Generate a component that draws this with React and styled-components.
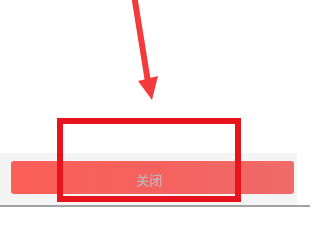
import React from 'react';
import styled, { createGlobalStyle } from 'styled-components';

const GlobalStyle = createGlobalStyle`
  html, body {
    margin: 0;
    padding: 0;
    background: #ffffff;
  }
  body {
    font-family: "Noto Sans CJK SC", "Liberation Sans", sans-serif;
  }
`;

const Screen = styled.div`
  position: relative;
  width: 310px;
  height: 207px;
  display: flex;
  flex-direction: column;
  background: #ffffff;
  overflow: hidden;
`;

const Body = styled.div`
  flex: 1;
  background: #ffffff;
`;

const Footer = styled.div`
  display: flex;
  padding: 8px 3px 11px 11px;
  margin-right: 13px;
  background: #f4f4f4;
`;

const CloseButton = styled.button`
  flex: 1;
  height: 33px;
  border: none;
  border-radius: 3px;
  background: linear-gradient(90deg, #fa5f58 0%, #f5625e 50%, #ef6b69 100%);
  color: #bfb2b2;
  font-family: "Noto Sans CJK SC", "Liberation Sans", sans-serif;
  font-size: 13px;
  font-weight: 500;
  padding: 3px 6px 0 0;
`;

const BottomBar = styled.div`
  height: 2px;
  background: #a3a3a3;
`;

const Highlight = styled.div`
  position: absolute;
  left: 57px;
  top: 118px;
  width: 184px;
  height: 84px;
  box-sizing: border-box;
  border: 6px solid #e8141d;
`;

const Arrow = styled.svg`
  position: absolute;
  left: 0;
  top: 0;
`;

const App = () => {
  return (
    <>
      <GlobalStyle />
      <Screen>
        <Body />
        <Footer>
          <CloseButton>关闭</CloseButton>
        </Footer>
        <BottomBar />
        <Highlight />
        <Arrow width="310" height="110" viewBox="0 0 310 110">
          <line x1="134.5" y1="-2" x2="148" y2="82" stroke="#f33a3c" strokeWidth="6" />
          <polygon points="138,81 158,76 152,100" fill="#f33a3c" />
        </Arrow>
      </Screen>
    </>
  );
};

export default App;
